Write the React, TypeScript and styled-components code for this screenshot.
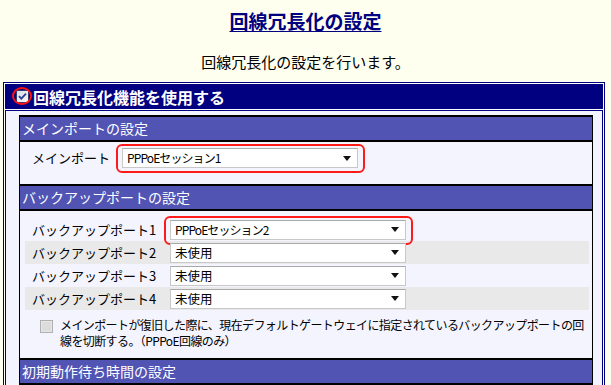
import React from "react";
import styled, { createGlobalStyle } from "styled-components";

const Global = createGlobalStyle`
  html, body { margin: 0; padding: 0; background: #fffff0; }
  body {
    font-family: "Noto Sans CJK JP", "Noto Sans", sans-serif;
    color: #000;
    width: 611px;
    height: 385px;
    overflow: hidden;
  }
`;

const Page = styled.div`
  display: flex;
  flex-direction: column;
  padding-top: 10px;
`;

const Title = styled.h1`
  margin: 0;
  text-align: center;
  font-size: 19px;
  line-height: 22px;
  font-weight: bold;
  color: #000080;
  text-decoration: underline;
  text-underline-offset: 2px;
`;

const Lead = styled.p`
  margin: 21px 0 0;
  text-align: center;
  font-size: 15px;
  line-height: 18px;
`;

const OuterTable = styled.div`
  margin: 11px 6px 0 3px;
  border: 1px solid #000080;
  padding: 1px;
  background: #fff;
  display: flex;
  flex-direction: column;
  gap: 1px;
`;

const MainHeader = styled.div`
  height: 25px;
  background: #000080;
  color: #fff;
  font-size: 16px;
  font-weight: bold;
  display: flex;
  align-items: center;
  gap: 4px;
  padding-left: 11px;
`;

const Circled = styled.span`
  position: relative;
  display: inline-flex;
  &::after {
    content: "";
    position: absolute;
    left: -4px;
    top: -3px;
    right: -3px;
    bottom: -2px;
    border: 2px solid #ff1010;
    border-radius: 50%;
  }
`;

const BodyCell = styled.div`
  border: 1px solid #000080;
  background: #f4f4ff;
  padding: 4px 9px 0 13px;
  height: 300px;
`;

const Frame = styled.div`
  width: 574px;
  box-sizing: border-box;
  border-left: 1px solid #000;
  border-right: 1px solid #000;
  display: flex;
  flex-direction: column;
`;

const SectionTitle = styled.div`
  border-top: 2px solid #000;
  border-bottom: 2px solid #000;
  background: #5254b4;
  color: #fff;
  font-size: 14px;
  line-height: 23px;
  height: 23px;
  padding-left: 2px;
  white-space: nowrap;
`;

const MainPortRow = styled.div`
  display: flex;
  align-items: center;
  gap: 12px;
  padding: 6px 0 16px 12px;
  font-size: 13px;
`;

const Label = styled.span`
  font-size: 13px;
  line-height: 20px;
  white-space: nowrap;
`;

const Highlight = styled.span<{ $on?: boolean }>`
  position: relative;
  display: inline-flex;
  &::after {
    content: "";
    display: ${(p) => (p.$on ? "block" : "none")};
    position: absolute;
    left: -6px;
    top: -4px;
    right: -7px;
    bottom: -5px;
    border: 2px solid #ff1a1a;
    border-radius: 6px;
    pointer-events: none;
  }
`;

const SelectBox = styled.div`
  width: 236px;
  height: 20px;
  box-sizing: border-box;
  border: 1px solid #c8c8c8;
  border-top-color: #a9a9a9;
  background: #fff;
  display: flex;
  align-items: center;
  justify-content: space-between;
  padding: 0 6px 0 4px;
  font-size: 12.5px;
  line-height: 18px;
  white-space: nowrap;
`;

const SelectText = styled.span<{ $tight?: boolean }>`
  letter-spacing: ${(p) => (p.$tight ? "-0.9px" : "0")};
  font-size: ${(p) => (p.$tight ? "12px" : "12.5px")};
`;

const Arrow = () => (
  <svg width="8" height="5" viewBox="0 0 8 5">
    <path d="M0 0H8L4 5Z" fill="#111" />
  </svg>
);

const BackupTable = styled.div`
  margin: 7px 3px 0 5px;
  display: flex;
  flex-direction: column;
`;

const BackupRow = styled.div<{ $alt?: boolean }>`
  display: grid;
  grid-template-columns: 145px 236px 1fr;
  align-items: center;
  height: 23px;
  background: ${(p) => (p.$alt ? "#e9e9e9" : "transparent")};
`;

const RowLabel = styled(Label)`
  padding-left: 7px;
`;

const CheckRow = styled.div`
  display: flex;
  align-items: flex-start;
  gap: 7px;
  padding: 7px 0 0 15px;
  font-size: 12px;
  line-height: 16px;
  height: 41px;
`;

const CheckText = styled.span`
  letter-spacing: -0.6px;
  white-space: nowrap;
`;

const HeaderCheck = () => (
  <svg width="13" height="13" viewBox="0 0 13 13">
    <defs>
      <linearGradient id="hc" x1="0" y1="0" x2="1" y2="1">
        <stop offset="0" stopColor="#dcdce6" />
        <stop offset="1" stopColor="#f8f8fc" />
      </linearGradient>
    </defs>
    <rect x="0.5" y="0.5" width="12" height="12" fill="url(#hc)" stroke="#2a3f7a" />
    <path d="M3 6.2L5.3 8.6L10 3.6" fill="none" stroke="#2b3f8c" strokeWidth="1.8" />
  </svg>
);

const DisabledCheck = () => (
  <svg width="13" height="13" viewBox="0 0 13 13" style={{ flex: "none", marginTop: 3 }}>
    <rect x="0.5" y="0.5" width="12" height="12" fill="#e6e6e6" stroke="#b0b0b0" />
    <rect x="2" y="2" width="9" height="9" fill="#dcdcdc" />
  </svg>
);

const backups = [
  { n: 1, v: "PPPoEセッション2", hl: true },
  { n: 2, v: "未使用" },
  { n: 3, v: "未使用" },
  { n: 4, v: "未使用" },
];

export default function App() {
  return (
    <>
      <Global />
      <Page>
        <Title>回線冗長化の設定</Title>
        <Lead>回線冗長化の設定を行います。</Lead>
        <OuterTable>
          <MainHeader>
            <Circled>
              <HeaderCheck />
            </Circled>
            回線冗長化機能を使用する
          </MainHeader>
          <BodyCell>
            <Frame>
              <SectionTitle>メインポートの設定</SectionTitle>
              <MainPortRow>
                <Label>メインポート</Label>
                <Highlight $on>
                  <SelectBox>
                    <SelectText $tight>PPPoEセッション1</SelectText>
                    <Arrow />
                  </SelectBox>
                </Highlight>
              </MainPortRow>
              <SectionTitle>バックアップポートの設定</SectionTitle>
              <BackupTable>
                {backups.map((b, i) => (
                  <BackupRow key={b.n} $alt={i % 2 === 1}>
                    <RowLabel>バックアップポート{b.n}</RowLabel>
                    <Highlight $on={b.hl}>
                      <SelectBox>
                        <SelectText $tight={b.hl}>{b.v}</SelectText>
                        <Arrow />
                      </SelectBox>
                    </Highlight>
                    <span />
                  </BackupRow>
                ))}
                <CheckRow>
                  <DisabledCheck />
                  <CheckText>
                    メインポートが復旧した際に、現在デフォルトゲートウェイに指定されているバックアップポートの回
                    <br />
                    線を切断する。（PPPoE回線のみ）
                  </CheckText>
                </CheckRow>
              </BackupTable>
              <SectionTitle>初期動作待ち時間の設定</SectionTitle>
            </Frame>
          </BodyCell>
        </OuterTable>
      </Page>
    </>
  );
}
